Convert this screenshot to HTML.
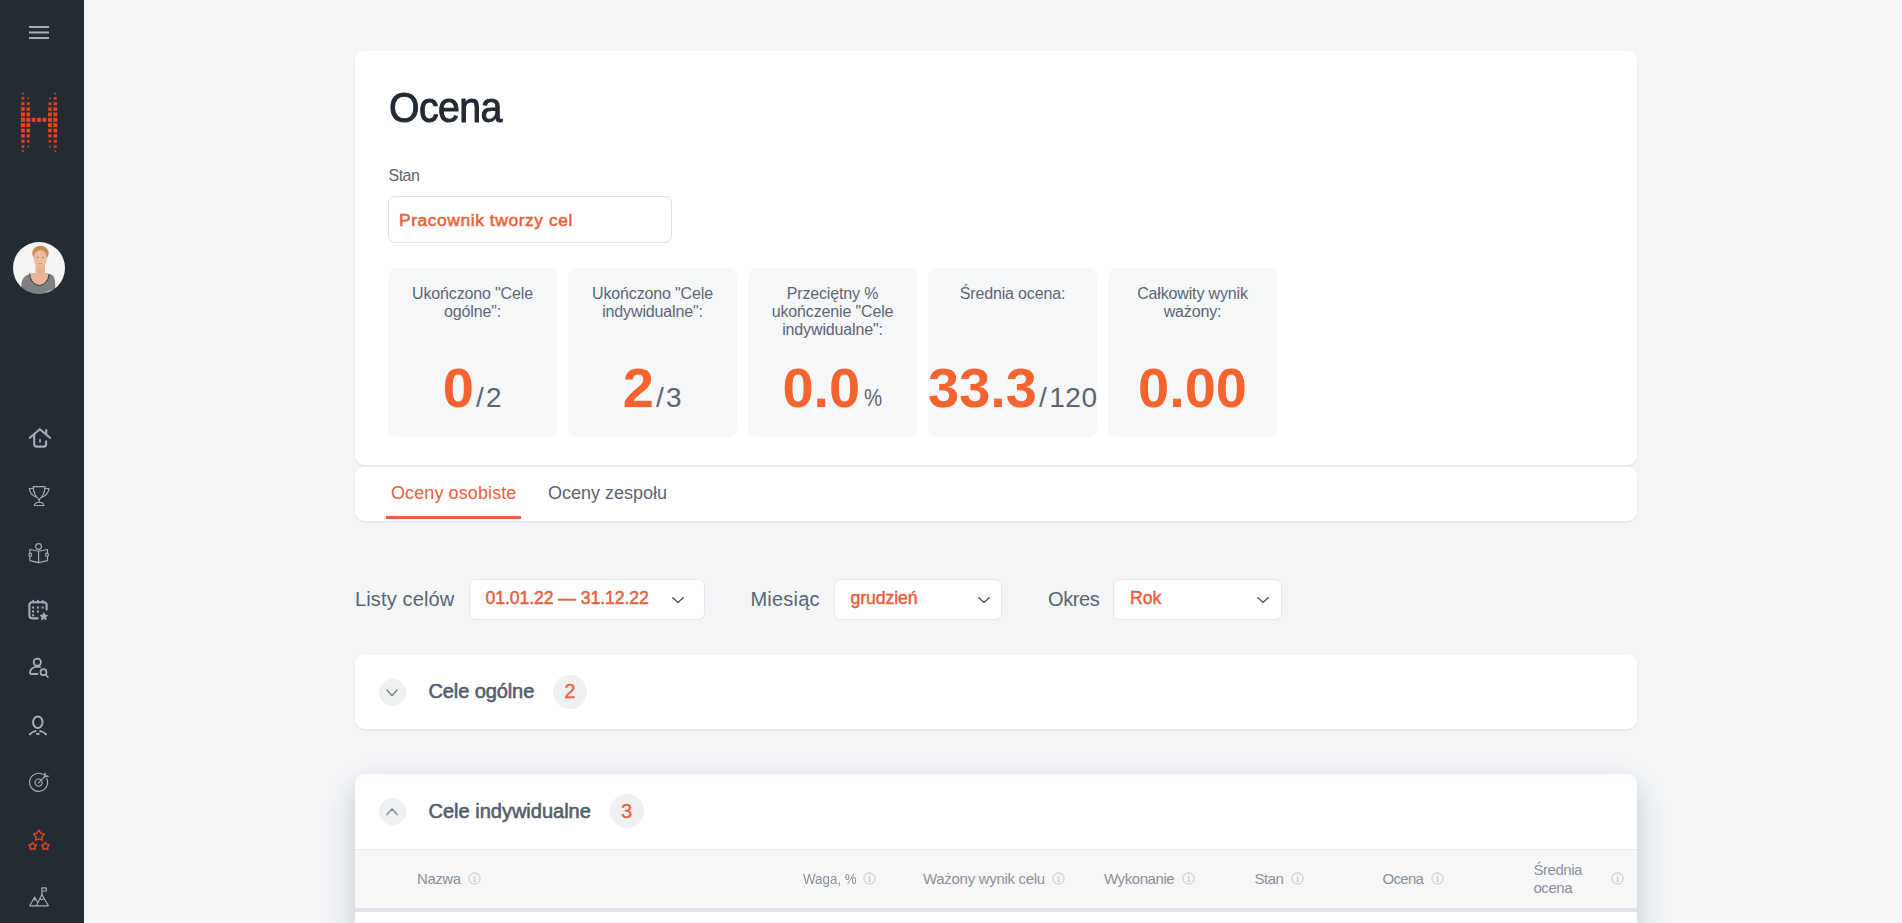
<!DOCTYPE html>
<html lang="pl">
<head>
<meta charset="utf-8">
<title>Ocena</title>
<style>
*{box-sizing:border-box;margin:0;padding:0}
html,body{width:1902px;height:923px;overflow:hidden}
body{background:#f3f5f7;font-family:"Liberation Sans",sans-serif;color:#5b6472;position:relative}
.abs{position:absolute}
.t{position:absolute;white-space:nowrap;line-height:1}
#side{position:absolute;left:0;top:0;width:84px;height:923px;background:#252b33}
.card{position:absolute;background:#fff;border-radius:9px}
#c1{left:355px;top:51px;width:1282px;height:414px;box-shadow:0 1px 2px rgba(40,50,70,.10)}
#c2{left:355px;top:467px;width:1282px;height:54px;box-shadow:0 1px 2px rgba(40,50,70,.10)}
#c3{left:355px;top:655px;width:1282px;height:74px;box-shadow:0 1px 2px rgba(40,50,70,.10)}
#c4{left:355px;top:774px;width:1282px;height:200px;border-radius:9px 9px 0 0;box-shadow:0 12px 28px rgba(40,50,70,.22)}
.tile{position:absolute;top:268px;width:169px;height:169px;background:#f6f7f9;border-radius:9px}
.lbl{position:absolute;left:0;width:169px;text-align:center;font-size:16px;letter-spacing:-.15px;line-height:18px;color:#5d6573;top:17px}
.big{position:absolute;left:0;top:92px;width:169px;text-align:center;white-space:nowrap;line-height:1;color:#5b6472}
.big b{color:#f7632d;font-size:56px;font-weight:bold}
.big span{font-size:28px;letter-spacing:.6px;margin-left:2px}
.big i{font-style:normal;letter-spacing:2.4px}
.sel{position:absolute;top:579px;height:41px;background:#fff;border:1px solid #e6e8ec;border-radius:7px}
.or{color:#e8613a}
.circ{position:absolute;border-radius:50%;background:#eff0f2}
#thead{position:absolute;left:0;top:75px;width:1282px;height:59px;background:#f7f7f8;border-top:1px solid #ededf0}
#thb{position:absolute;left:0;top:134px;width:1282px;height:4px;background:#e1e3e8}
.th{position:absolute;white-space:nowrap;font-size:15px;line-height:18px;color:#8a919c}
.inf{position:absolute;width:12px;height:12px}
</style>
</head>
<body>
<div id="side"></div>
<svg class="abs" style="left:0;top:0" width="84" height="923" viewBox="0 0 84 923">
<!-- hamburger -->
<g fill="#a9aeb6"><rect x="29" y="26" width="20" height="2"/><rect x="29" y="31.5" width="20" height="2"/><rect x="29" y="37" width="20" height="2"/></g>
<!-- logo -->
<g><rect x="22.03" y="92.76" width="1.80" height="1.80" fill="#d8401f"/><rect x="21.53" y="96.94" width="2.80" height="2.80" fill="#d8401f"/><rect x="21.28" y="102.05" width="3.30" height="3.30" fill="#d8401f"/><rect x="21.13" y="107.27" width="3.60" height="3.60" fill="#ee441b"/><rect x="20.98" y="112.49" width="3.90" height="3.90" fill="#ee441b"/><rect x="20.88" y="117.75" width="4.10" height="4.10" fill="#ee441b"/><rect x="20.93" y="123.17" width="4.00" height="4.00" fill="#ee441b"/><rect x="21.03" y="128.64" width="3.80" height="3.80" fill="#ee441b"/><rect x="21.13" y="134.10" width="3.60" height="3.60" fill="#ee441b"/><rect x="21.33" y="139.67" width="3.20" height="3.20" fill="#d8401f"/><rect x="21.53" y="145.23" width="2.80" height="2.80" fill="#d8401f"/><rect x="22.03" y="150.12" width="1.80" height="1.80" fill="#d8401f"/><rect x="54.42" y="92.76" width="1.80" height="1.80" fill="#d8401f"/><rect x="53.92" y="96.94" width="2.80" height="2.80" fill="#d8401f"/><rect x="53.67" y="102.05" width="3.30" height="3.30" fill="#d8401f"/><rect x="53.52" y="107.27" width="3.60" height="3.60" fill="#ee441b"/><rect x="53.37" y="112.49" width="3.90" height="3.90" fill="#ee441b"/><rect x="53.27" y="117.75" width="4.10" height="4.10" fill="#ee441b"/><rect x="53.32" y="123.17" width="4.00" height="4.00" fill="#ee441b"/><rect x="53.42" y="128.64" width="3.80" height="3.80" fill="#ee441b"/><rect x="53.52" y="134.10" width="3.60" height="3.60" fill="#ee441b"/><rect x="53.72" y="139.67" width="3.20" height="3.20" fill="#d8401f"/><rect x="53.92" y="145.23" width="2.80" height="2.80" fill="#d8401f"/><rect x="54.42" y="150.12" width="1.80" height="1.80" fill="#d8401f"/><rect x="27.44" y="97.49" width="1.70" height="1.70" fill="#d8401f"/><rect x="26.84" y="102.25" width="2.90" height="2.90" fill="#d8401f"/><rect x="26.59" y="107.37" width="3.40" height="3.40" fill="#ee441b"/><rect x="26.39" y="112.54" width="3.80" height="3.80" fill="#ee441b"/><rect x="26.24" y="117.75" width="4.10" height="4.10" fill="#ee441b"/><rect x="26.34" y="123.22" width="3.90" height="3.90" fill="#ee441b"/><rect x="26.49" y="128.74" width="3.60" height="3.60" fill="#ee441b"/><rect x="26.69" y="134.30" width="3.20" height="3.20" fill="#ee441b"/><rect x="26.94" y="139.92" width="2.70" height="2.70" fill="#d8401f"/><rect x="27.44" y="145.78" width="1.70" height="1.70" fill="#d8401f"/><rect x="49.10" y="97.49" width="1.70" height="1.70" fill="#d8401f"/><rect x="48.50" y="102.25" width="2.90" height="2.90" fill="#d8401f"/><rect x="48.25" y="107.37" width="3.40" height="3.40" fill="#ee441b"/><rect x="48.05" y="112.54" width="3.80" height="3.80" fill="#ee441b"/><rect x="47.90" y="117.75" width="4.10" height="4.10" fill="#ee441b"/><rect x="48.00" y="123.22" width="3.90" height="3.90" fill="#ee441b"/><rect x="48.15" y="128.74" width="3.60" height="3.60" fill="#ee441b"/><rect x="48.35" y="134.30" width="3.20" height="3.20" fill="#ee441b"/><rect x="48.60" y="139.92" width="2.70" height="2.70" fill="#d8401f"/><rect x="49.10" y="145.78" width="1.70" height="1.70" fill="#d8401f"/><rect x="31.66" y="117.80" width="4.00" height="4.00" fill="#ee441b"/><rect x="37.02" y="117.80" width="4.00" height="4.00" fill="#ee441b"/><rect x="42.39" y="117.80" width="4.00" height="4.00" fill="#ee441b"/></g>
<!-- avatar -->
<defs><filter id="bl" x="-10%" y="-10%" width="120%" height="120%"><feGaussianBlur stdDeviation=".45"/></filter><clipPath id="av"><circle cx="39" cy="268" r="26"/></clipPath></defs>
<g clip-path="url(#av)"><g filter="url(#bl)">
<rect x="12" y="241" width="54" height="54" fill="#f4f4f5"/>
<ellipse cx="40.5" cy="253.5" rx="8.2" ry="7.8" fill="#c8935c"/>
<rect x="35.6" y="262" width="9.4" height="13" fill="#e6b294"/>
<ellipse cx="40.3" cy="258.5" rx="6.6" ry="8.6" fill="#ecbc9f"/>
<path d="M33.5 255 Q35 249 41 249.5 Q46.5 250 47.3 256 Q48.6 250 45 247.6 Q40 245 35.5 247.6 Q32 250.5 33.5 255Z" fill="#c48a52"/>
<path d="M20.5 296 L21.5 283 Q22.5 276 29 274.5 L35.5 273 L45.5 273 L51 274.5 Q55 276 55.2 283 L55.5 296Z" fill="#7e8083"/>
<path d="M30 273.2 Q30.5 284 39.5 285.2 Q47.5 284 49 273.8 L45 273 L35.5 273Z" fill="#e8b698"/>
<path d="M29.6 273.4 Q30.2 284.3 39.5 285.6 Q47.8 284.3 49.3 274" fill="none" stroke="#3b3b3d" stroke-width="1"/>
<path d="M46 292 Q50 289.5 53 290.5 L52 293 Q49 293 46.5 294Z" fill="#e6b294"/>
<g opacity=".5"><rect x="36.7" y="256.8" width="2" height="1" fill="#6b4a3a"/><rect x="42" y="256.8" width="2" height="1" fill="#6b4a3a"/><rect x="38.6" y="263.2" width="3.4" height="1.1" fill="#c9584f"/></g>
</g></g>
<!-- home -->
<g fill="none" stroke="#a7adb6" stroke-width="2.1" stroke-linecap="round" stroke-linejoin="round">
<path d="M29.8 437.8 L39.8 429.2 L50 437.8"/><path d="M46.3 433.6 V430"/>
<path d="M34.2 435.5 V444.3 Q34.2 446.6 36.5 446.6 H43.8 Q46.1 446.6 46.1 444.3 V441.2"/>
<path d="M40 440 V441.6" stroke-width="1.9"/>
</g>
<!-- trophy -->
<g fill="none" stroke="#a7adb6" stroke-width="1.15" stroke-linejoin="round" stroke-linecap="round">
<path d="M33.2 486.6 H45.1 Q44.8 495 39.15 499.6 Q33.5 495 33.2 486.6Z"/>
<path d="M33.4 488.5 H29.3 Q29.8 494.5 36.2 497.2"/><path d="M44.9 488.5 H49 Q48.5 494.5 42.1 497.2"/>
<path d="M39.15 499.6 V502.2"/>
<path d="M34.4 505.5 Q34.6 502.2 39.15 502.2 Q43.7 502.2 43.9 505.5Z"/>
</g>
<!-- reader -->
<g fill="none" stroke="#a7adb6" stroke-width="1.15" stroke-linejoin="round" stroke-linecap="round">
<circle cx="38.6" cy="546.5" r="2.9"/>
<path d="M38.6 551.2 L29.8 549.5 V560.6 L38.6 562.6 L47.5 560.6 V549.5Z"/><path d="M38.6 551.2 V562.6"/>
<ellipse cx="30.3" cy="554.8" rx="1.4" ry="1.7" fill="#252b33"/><ellipse cx="47" cy="554.8" rx="1.4" ry="1.7" fill="#252b33"/>
</g>
<!-- calendar star -->
<g fill="none" stroke="#a7adb6" stroke-width="2.1" stroke-linecap="round" stroke-linejoin="round">
<path d="M37.6 618.4 H32.2 Q29.4 618.4 29.4 615.6 V605 Q29.4 602.3 32.2 602.3 H43.8 Q46.6 602.3 46.6 605 V609.6"/>
<path d="M33.2 600.6 V602.6 M37.9 600.6 V602.6 M42.7 600.6 V602.6" stroke-width="1.7"/>
</g>
<g fill="#a7adb6">
<rect x="32.1" y="606.5" width="2" height="2"/><rect x="36.9" y="606.5" width="2" height="2"/><rect x="41.7" y="606.5" width="2" height="2"/>
<rect x="32.1" y="610.5" width="2" height="2"/><rect x="36.9" y="610.5" width="2" height="2"/>
<rect x="32.1" y="614.3" width="2" height="2"/>
<polygon points="43.80,612.60 44.98,614.98 47.60,615.36 45.70,617.22 46.15,619.84 43.80,618.60 41.45,619.84 41.90,617.22 40.00,615.36 42.62,614.98" stroke="#a7adb6" stroke-width=".7" stroke-linejoin="round"/>
</g>
<!-- user search -->
<g fill="none" stroke="#a7adb6" stroke-width="1.9" stroke-linecap="round" stroke-linejoin="round">
<circle cx="37.3" cy="662.2" r="3.6"/>
<path d="M37.4 674 H32 Q29.4 674 30.2 671.6 Q31.4 667.6 35.6 666.9 H40"/>
<circle cx="43.5" cy="672.2" r="3" stroke-width="1.7"/><path d="M45.8 674.7 L47.8 677" stroke-width="1.7"/>
</g>
<!-- user collar -->
<g fill="none" stroke="#a7adb6" stroke-width="2" stroke-linecap="round">
<ellipse cx="37.8" cy="722.3" rx="4.7" ry="5.8"/>
<path d="M35.4 731.1 Q31.5 732 29.8 734.3"/><path d="M40.3 731.1 Q44.2 732 46 734.3"/>
<path d="M36.8 733.7 Q37.8 734.6 38.9 733.7" stroke-width="1.8"/>
</g>
<!-- target -->
<g fill="none" stroke="#a7adb6" stroke-width="1.15" stroke-linecap="round" stroke-linejoin="round">
<path d="M43.2 774.6 A9 9 0 1 0 46.8 778.6"/>
<circle cx="38.6" cy="782.6" r="3.6"/>
<path d="M38.4 782.8 L44.6 776.6"/>
<path d="M44.3 776.7 L44.9 773 L45.7 775.6 L48.4 776.3 L44.6 776.9"/>
</g>
<!-- stars -->
<g fill="none" stroke="#dd4520" stroke-width="1.5" stroke-linejoin="round">
<polygon points="38.90,830.20 40.78,833.11 44.13,834.00 41.94,836.69 42.13,840.15 38.90,838.90 35.67,840.15 35.86,836.69 33.67,834.00 37.02,833.11"/>
<polygon points="32.70,842.30 34.08,844.40 36.50,845.06 34.93,847.03 35.05,849.54 32.70,848.65 30.35,849.54 30.47,847.03 28.90,845.06 31.32,844.40"/>
<polygon points="45.40,842.30 46.78,844.40 49.20,845.06 47.63,847.03 47.75,849.54 45.40,848.65 43.05,849.54 43.17,847.03 41.60,845.06 44.02,844.40"/>
</g>
<!-- mountains -->
<g fill="none" stroke="#a7adb6" stroke-width="1.15" stroke-linejoin="round" stroke-linecap="round">
<path d="M36.4 905.8 L41.9 894.6 L48.4 905.8 H29.8 L34.6 896.9 L37.3 901.9"/>
<path d="M41.9 894.6 V887.8 H46.3 V891 H41.9"/>
<path d="M39.9 898.8 Q41.9 900.6 43.9 898.4"/><path d="M33.4 899.4 Q34.6 900.4 35.8 899.3"/>
</g>
</svg>

<div class="card" id="c1"></div>
<div class="card" id="c2"></div>
<div class="card" id="c3"></div>
<div class="card" id="c4">
  <div id="thead"></div>
  <div id="thb"></div>
</div>


<!-- header card content -->
<div class="t" id="title" style="left:389px;top:87px;font-size:42px;color:#232a34;-webkit-text-stroke:1px #232a34;letter-spacing:-.6px;transform:scaleX(.935);transform-origin:0 0">Ocena</div>
<div class="t" id="stanl" style="left:388.5px;top:168px;font-size:16px;color:#5d6573;letter-spacing:-.5px">Stan</div>
<div class="abs" id="inp" style="left:388px;top:196px;width:284px;height:47px;border:1px solid #dfe2e6;border-radius:7px;background:#fff"></div>
<div class="t or" id="inpt" style="left:399px;top:211.5px;font-size:17.4px;-webkit-text-stroke:.55px #e8613a;letter-spacing:.58px">Pracownik tworzy cel</div>

<div class="tile" style="left:388px"><div class="lbl">Ukończono "Cele<br>ogólne":</div><div class="big"><b>0</b><span><i>/</i>2</span></div></div>
<div class="tile" style="left:568px"><div class="lbl">Ukończono "Cele<br>indywidualne":</div><div class="big"><b>2</b><span><i>/</i>3</span></div></div>
<div class="tile" style="left:748px"><div class="lbl">Przeciętny %<br>ukończenie "Cele<br>indywidualne":</div><div class="big"><b>0.0</b><span style="font-size:24px;margin:0 -3px 0 4px;display:inline-block;transform:scaleX(.85) translateY(-1px);transform-origin:0 100%;letter-spacing:0">%</span></div></div>
<div class="tile" style="left:928px"><div class="lbl">Średnia ocena:</div><div class="big"><b>33.3</b><span><i>/</i>120</span></div></div>
<div class="tile" style="left:1108px"><div class="lbl">Całkowity wynik<br>ważony:</div><div class="big"><b>0.00</b></div></div>

<!-- tabs -->
<div class="t or" id="tab1" style="left:391px;top:484px;font-size:18px;letter-spacing:.1px">Oceny osobiste</div>
<div class="t" id="tab2" style="left:548px;top:484px;font-size:18px;color:#5b6472">Oceny zespołu</div>
<div class="abs" style="left:386px;top:516px;width:135px;height:3px;background:#e8613a"></div>

<!-- filters -->
<div class="t" id="f1" style="left:355px;top:589px;font-size:20px;letter-spacing:.14px">Listy celów</div>
<div class="sel" style="left:469px;width:236px"></div>
<div class="t or" id="s1" style="left:485.5px;top:590.2px;font-size:17.7px;-webkit-text-stroke:.5px #e8613a;letter-spacing:-.1px">01.01.22 — 31.12.22</div>
<div class="t" id="f2" style="left:750.5px;top:589px;font-size:20px;letter-spacing:.2px">Miesiąc</div>
<div class="sel" style="left:834px;width:168px"></div>
<div class="t or" id="s2" style="left:850.5px;top:590.2px;font-size:17.7px;-webkit-text-stroke:.5px #e8613a;letter-spacing:-.1px">grudzień</div>
<div class="t" id="f3" style="left:1048px;top:589px;font-size:20px;letter-spacing:-.4px">Okres</div>
<div class="sel" style="left:1113px;width:169px"></div>
<div class="t or" id="s3" style="left:1130px;top:590.2px;font-size:17.7px;-webkit-text-stroke:.5px #e8613a;letter-spacing:-.1px">Rok</div>

<svg class="abs" style="left:671px;top:595px" width="14" height="9" viewBox="0 0 14 9"><path d="M1.7 2.6 L7 7.4 L12.3 2.6" fill="none" stroke="#4b5361" stroke-width="1.35" stroke-linecap="round" stroke-linejoin="round"/></svg><svg class="abs" style="left:977px;top:595px" width="14" height="9" viewBox="0 0 14 9"><path d="M1.7 2.6 L7 7.4 L12.3 2.6" fill="none" stroke="#4b5361" stroke-width="1.35" stroke-linecap="round" stroke-linejoin="round"/></svg><svg class="abs" style="left:1256px;top:595px" width="14" height="9" viewBox="0 0 14 9"><path d="M1.7 2.6 L7 7.4 L12.3 2.6" fill="none" stroke="#4b5361" stroke-width="1.35" stroke-linecap="round" stroke-linejoin="round"/></svg>
<!-- section 1 -->
<div class="circ" style="left:379px;top:678.5px;width:27px;height:27px"></div>
<div class="t" id="h1" style="left:428.5px;top:680.8px;font-size:20px;color:#555e6c;-webkit-text-stroke:.6px #555e6c;letter-spacing:-.1px">Cele ogólne</div>
<div class="circ" style="left:552.7px;top:674.7px;width:34px;height:34px"></div>
<div class="t or" id="n1" style="left:564.3px;top:680.8px;font-size:20.3px;-webkit-text-stroke:.3px #e8613a">2</div>

<svg class="abs" style="left:385.4px;top:688.0px" width="14" height="9" viewBox="0 0 14 9"><path d="M1.9 2 L7 7.5 L12.1 2" fill="none" stroke="#7b828c" stroke-width="1.35" stroke-linecap="round" stroke-linejoin="round"/></svg>
<!-- section 2 -->
<div class="circ" style="left:379px;top:797.8px;width:27px;height:27px"></div>
<div class="t" id="h2" style="left:428.5px;top:800.5px;font-size:20px;color:#555e6c;-webkit-text-stroke:.6px #555e6c;letter-spacing:0">Cele indywidualne</div>
<div class="circ" style="left:609.8px;top:793.7px;width:34px;height:34px"></div>
<div class="t or" id="n2" style="left:621px;top:800.5px;font-size:20.3px;-webkit-text-stroke:.3px #e8613a">3</div>

<svg class="abs" style="left:385.4px;top:806.5px" width="14" height="9" viewBox="0 0 14 9"><path d="M1.9 7.5 L7 2 L12.1 7.5" fill="none" stroke="#7b828c" stroke-width="1.35" stroke-linecap="round" stroke-linejoin="round"/></svg>
<!-- table header -->
<div class="th" id="th1" style="left:417px;top:870px;letter-spacing:-0.45px">Nazwa</div>
<div class="th" id="th2" style="left:802.5px;top:870px;letter-spacing:0px;transform:scaleX(.89);transform-origin:0 0">Waga, %</div>
<div class="th" id="th3" style="left:923px;top:870px;letter-spacing:-0.3px">Ważony wynik celu</div>
<div class="th" id="th4" style="left:1104px;top:870px;letter-spacing:-0.42px">Wykonanie</div>
<div class="th" id="th5" style="left:1254.5px;top:870px;letter-spacing:-0.5px">Stan</div>
<div class="th" id="th6" style="left:1382.5px;top:870px;letter-spacing:-0.7px">Ocena</div>
<div class="th" id="th7" style="left:1533.5px;top:860.5px;letter-spacing:-0.47px">Średnia<br>ocena</div>

<!-- info icons -->
<svg class="abs" style="left:467.9px;top:872.4px" width="13" height="13" viewBox="0 0 13 13"><circle cx="6.5" cy="6.5" r="5.6" fill="none" stroke="#bdc1c8" stroke-width="1"/><path d="M5.4 5.3h1.5v3.9M5.2 9.3h2.8M6.6 3.2v1" fill="none" stroke="#b9bdc4" stroke-width=".9"/></svg><svg class="abs" style="left:862.6px;top:872.4px" width="13" height="13" viewBox="0 0 13 13"><circle cx="6.5" cy="6.5" r="5.6" fill="none" stroke="#bdc1c8" stroke-width="1"/><path d="M5.4 5.3h1.5v3.9M5.2 9.3h2.8M6.6 3.2v1" fill="none" stroke="#b9bdc4" stroke-width=".9"/></svg><svg class="abs" style="left:1051.8px;top:872.4px" width="13" height="13" viewBox="0 0 13 13"><circle cx="6.5" cy="6.5" r="5.6" fill="none" stroke="#bdc1c8" stroke-width="1"/><path d="M5.4 5.3h1.5v3.9M5.2 9.3h2.8M6.6 3.2v1" fill="none" stroke="#b9bdc4" stroke-width=".9"/></svg><svg class="abs" style="left:1181.7px;top:872.4px" width="13" height="13" viewBox="0 0 13 13"><circle cx="6.5" cy="6.5" r="5.6" fill="none" stroke="#bdc1c8" stroke-width="1"/><path d="M5.4 5.3h1.5v3.9M5.2 9.3h2.8M6.6 3.2v1" fill="none" stroke="#b9bdc4" stroke-width=".9"/></svg><svg class="abs" style="left:1290.8px;top:872.4px" width="13" height="13" viewBox="0 0 13 13"><circle cx="6.5" cy="6.5" r="5.6" fill="none" stroke="#bdc1c8" stroke-width="1"/><path d="M5.4 5.3h1.5v3.9M5.2 9.3h2.8M6.6 3.2v1" fill="none" stroke="#b9bdc4" stroke-width=".9"/></svg><svg class="abs" style="left:1430.6px;top:872.4px" width="13" height="13" viewBox="0 0 13 13"><circle cx="6.5" cy="6.5" r="5.6" fill="none" stroke="#bdc1c8" stroke-width="1"/><path d="M5.4 5.3h1.5v3.9M5.2 9.3h2.8M6.6 3.2v1" fill="none" stroke="#b9bdc4" stroke-width=".9"/></svg><svg class="abs" style="left:1611.3px;top:872.4px" width="13" height="13" viewBox="0 0 13 13"><circle cx="6.5" cy="6.5" r="5.6" fill="none" stroke="#bdc1c8" stroke-width="1"/><path d="M5.4 5.3h1.5v3.9M5.2 9.3h2.8M6.6 3.2v1" fill="none" stroke="#b9bdc4" stroke-width=".9"/></svg>
</body>
</html>
